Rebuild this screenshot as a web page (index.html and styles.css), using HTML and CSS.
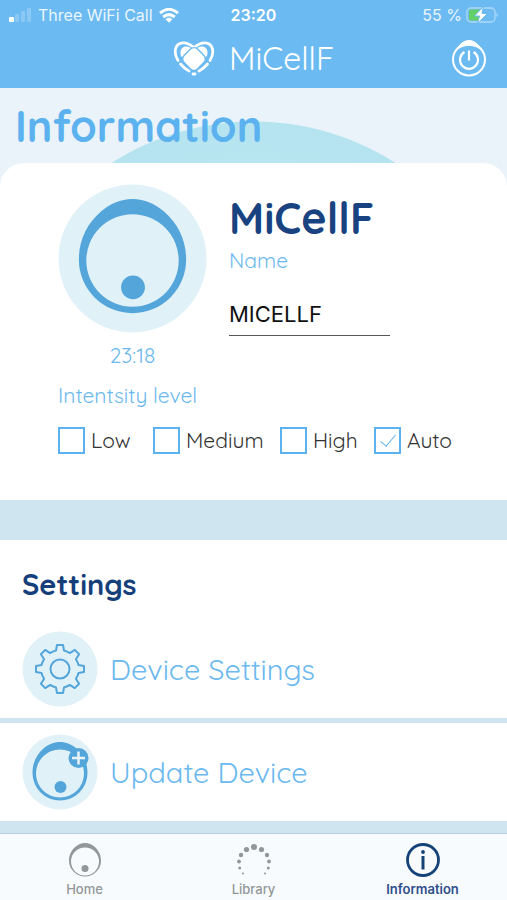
FILE: index.html
```
<!DOCTYPE html>
<html lang="en">
<head>
<meta charset="utf-8">
<meta name="viewport" content="width=device-width, initial-scale=1">
<title>MiCellF – Information</title>
<link rel="stylesheet" href="styles.css">
</head>
<body>
<header class="top">
  <div class="status">
    <div class="status-left">
      <svg width="24" height="14" viewBox="0 0 24 14" fill="#fff" aria-hidden="true">
        <rect x="1" y="9" width="5" height="5" rx="1"/>
        <g opacity=".22"><rect x="7" y="6" width="4" height="8" rx="1"/><rect x="13" y="3" width="4" height="11" rx="1"/><rect x="19" y="0" width="4" height="14" rx="1"/></g>
      </svg>
      <span>Three WiFi Call</span>
      <svg width="20" height="15" viewBox="0 0 20 15" fill="none" stroke="#fff" stroke-width="3" aria-hidden="true">
        <path d="M1 5.2Q10-2.6 19 5.2"/><path d="M4.2 9Q10 4.2 15.8 9"/><path d="M6.6 11.2Q10 8.4 13.4 11.2L10 14.8Z" fill="#fff" stroke="none"/>
      </svg>
    </div>
    <span class="clock">23:20</span>
    <div class="status-right">
      <span>55 %</span>
      <svg width="33" height="18" viewBox="0 0 33 18" aria-hidden="true">
        <rect x="1" y="2" width="28" height="14" rx="4" fill="none" stroke="#fff" stroke-opacity=".45" stroke-width="1.3"/>
        <path d="M30.5 6.5q2.5 2.5 0 5z" fill="#fff" opacity=".5"/>
        <path d="M5 3.500h8v11H5a2 2 0 0 1-2-2v-7a2 2 0 0 1 2-2z" fill="#65cf69"/>
        <path d="M17.500 0.500 8.500 10h5l-2 7.500 10-10h-5.500z" fill="#fff" stroke="#6bbaf1" stroke-width="1"/>
      </svg>
    </div>
  </div>
  <div class="nav">
    <div class="brand">
      <svg width="42" height="36" viewBox="0 0 42 36" aria-hidden="true">
        <g fill="none" stroke="#fff" stroke-width="2.800" stroke-linecap="round">
          <path d="M5 20.500C0 12.500 2 3.500 9.500 2.800C14 2.500 18 5 21 7.500C24 5 28 2.500 32.500 2.800C40 3.500 42 12.500 37 20.500"/>
          <path d="M7.500 24C10 27 13 29.500 16 31M34.500 24C32 27 29 29.500 26 31M20 34h2"/>
        </g>
        <path d="M8 16C6 9 10 6.500 13 6.500C16 6.500 19 8.500 21 10C23 8.500 26 6.500 29 6.500C32 6.500 36 9 34 16L21 27Z" fill="#fff"/>
        <rect x="11.500" y="9.500" width="19" height="19" rx="5" transform="rotate(45 21 19)" fill="#fff" stroke="#6bbaf1" stroke-width="1.400"/>
      </svg>
      <span>MiCellF</span>
    </div>
    <button class="power" type="button" aria-label="Power">
      <svg width="36" height="38" viewBox="0 0 36 38" fill="none" stroke="#fff" aria-hidden="true">
        <circle cx="18" cy="20.500" r="16" stroke-width="2"/>
        <path d="M4.500 12C8 5.500 13 1.500 18 1.500C23 1.500 28 5.500 31.500 12C25 4.500 11 4.500 4.500 12Z" fill="#fff" stroke-width="1"/>
        <path d="M13.500 13a9 9 0 1 0 9 0M18 11.500v10" stroke-width="2.200"/>
      </svg>
    </button>
  </div>
</header>
<main>
  <section class="hero">
    <h1>Information</h1>
    <div class="card">
      <div class="device">
        <div class="device-art">
          <svg class="device-icon" viewBox="0 0 150 150" aria-hidden="true">
            <circle cx="75" cy="75" r="74.500" fill="#e0f1f8"/>
            <path fill="#53a5da" fill-rule="evenodd" d="M75 15C87 15 98 20 107 28C121 40 129 57 129 76A54 54 0 0 1 21 76C21 57 29 40 43 28C52 20 63 15 75 15ZM75 30.500A46.500 46.500 0 1 0 75 123.500A46.500 46.500 0 1 0 75 30.500Z"/>
            <circle cx="75.500" cy="104" r="12" fill="#53a5da"/>
          </svg>
          <time>23:18</time>
        </div>
        <div class="device-info">
          <h2>MiCellF</h2>
          <label for="name">Name</label>
          <input id="name" type="text" value="MICELLF">
        </div>
      </div>
      <fieldset class="levels">
        <legend>Intentsity level</legend>
        <div class="options">
          <label><input type="checkbox">Low</label>
          <label><input type="checkbox">Medium</label>
          <label><input type="checkbox">High</label>
          <label><input type="checkbox" checked>Auto</label>
        </div>
      </fieldset>
    </div>
  </section>
  <section class="settings">
    <h2>Settings</h2>
    <a class="row" href="#device-settings">
      <svg width="76" height="76" viewBox="-38 -38 76 76" aria-hidden="true">
        <circle r="37.500" fill="#e0f1f8"/>
        <g fill="none" stroke="#53a5da" stroke-width="2" stroke-linejoin="round">
          <circle r="9.500"/>
          <path d="M-3-24H3L4-18.500Q6.500-18 9.800-15.900L14.800-19.100 19.100-14.800 15.900-9.800Q18-6.500 18.500-4L24-3V3L18.500 4Q18 6.500 15.900 9.800L19.100 14.800 14.800 19.100 9.800 15.900Q6.500 18 4 18.500L3 24H-3L-4 18.500Q-6.500 18-9.800 15.900L-14.800 19.100-19.100 14.800-15.900 9.800Q-18 6.500-18.500 4L-24 3V-3L-18.500-4Q-18-6.500-15.900-9.800L-19.100-14.800-14.800-19.100-9.800-15.900Q-6.500-18-4-18.500Z"/>
        </g>
      </svg>
      <span>Device Settings</span>
    </a>
    <a class="row" href="#update-device">
      <svg width="76" height="76" viewBox="0 0 76 76" aria-hidden="true">
        <circle cx="38" cy="38" r="37.500" fill="#e0f1f8"/>
        <path fill="#53a5da" fill-rule="evenodd" d="M38 8C44 8 50 10.500 54.500 14.500C61.500 20.500 65.500 29 65.500 39A27.500 27.500 0 0 1 10.500 39C10.500 29 14.500 20.500 21.500 14.500C26 10.500 32 8 38 8ZM38 15.500A24 24 0 1 0 38 63.500A24 24 0 1 0 38 15.500Z"/>
        <circle cx="38.500" cy="53" r="6" fill="#53a5da"/>
        <circle cx="56.500" cy="24" r="10" fill="#53a5da"/>
        <path d="M50 24h13M56.500 17.500v13" stroke="#e9f5fb" stroke-width="2.500"/>
      </svg>
      <span>Update Device</span>
    </a>
  </section>
</main>
<nav class="tabs">
  <a href="#home">
    <svg width="34" height="36" viewBox="0 0 34 36" aria-hidden="true">
      <path fill="#929797" fill-rule="evenodd" d="M17 1C20.500 1 24 2.500 26.500 4.800C30.500 8.300 33 13 33 18.500A16 16 0 0 1 1 18.500C1 13 3.500 8.300 7.500 4.800C10 2.500 13.500 1 17 1ZM17 5.500A14 14 0 1 0 17 33.500A14 14 0 1 0 17 5.500Z"/>
      <circle cx="17" cy="26.500" r="3.500" fill="#929797"/>
    </svg>
    <span>Home</span>
  </a>
  <a href="#library">
    <svg width="36" height="36" viewBox="0 0 36 36" fill="#929797" aria-hidden="true">
      <circle cx="18" cy="5" r="3"/><circle cx="10.500" cy="7.500" r="2.600"/><circle cx="25.500" cy="7.500" r="2.600"/><circle cx="5" cy="13" r="2.200"/><circle cx="31" cy="13" r="2.200"/><circle cx="3" cy="19.500" r="1.900"/><circle cx="33" cy="19.500" r="1.900"/><circle cx="3.700" cy="26" r="1.500"/><circle cx="32.300" cy="26" r="1.500"/><circle cx="7" cy="31.500" r="1"/><circle cx="29" cy="31.500" r="1"/>
    </svg>
    <span>Library</span>
  </a>
  <a class="active" href="#information" aria-current="page">
    <svg width="36" height="36" viewBox="0 0 36 36" fill="none" stroke="#154277" aria-hidden="true">
      <circle cx="18" cy="18" r="15.500" stroke-width="2.800"/>
      <path d="M18 14v13.500" stroke-width="3"/><circle cx="18" cy="10" r="1.900" fill="#154277" stroke="none"/>
    </svg>
    <span>Information</span>
  </a>
</nav>
</body>
</html>
```
FILE: styles.css
```
* { box-sizing: border-box; }

body {
  margin: 0;
  min-height: 100vh;
  display: flex;
  flex-direction: column;
  background: #cfe6f0;
  color: #333;
  font-family: Quicksand, Lato, sans-serif;
}

h1, h2, fieldset, legend { margin: 0; padding: 0; border: 0; }
a { color: inherit; text-decoration: none; }
svg { display: block; flex: none; }

.top {
  background: #6bbaf1;
  color: #fff;
}

.status {
  display: grid;
  grid-template-columns: 1fr auto 1fr;
  align-items: center;
  height: 30px;
  padding: 0 8px;
  font: 16px/30px Inter, sans-serif;
}
.status-left, .status-right {
  display: flex;
  align-items: center;
  gap: 6px;
  color: #eaf6fe;
}
.status-right { justify-content: flex-end; gap: 4px; }
.clock { font-weight: 600; }

.nav {
  display: grid;
  grid-template-columns: 1fr auto 1fr;
  align-items: center;
  height: 58px;
  padding: 0 20px 2px;
}
.brand {
  grid-column: 2;
  display: flex;
  align-items: center;
  gap: 14px;
  font-size: 32px;
  font-weight: 400;
}
.power {
  justify-self: end;
  padding: 0;
  border: 0;
  background: none;
}

.hero {
  background:
    radial-gradient(circle 264px at 50% 297px, #c4edf4 0, #b5e4f0 263px, transparent 264px),
    #e9f3f9;
}
h1 {
  padding: 12px 15px 11px;
  color: #5bb2ef;
  font-size: 43px;
  font-weight: 700;
  line-height: 52px;
}

.card {
  padding: 21px 54px 46px 58px;
  border-radius: 24px 24px 0 0;
  background: #fff;
}
.device {
  display: flex;
  gap: 22px;
}
.device-art {
  text-align: center;
  color: #6bb9ee;
}
.device-icon { width: 149px; height: 149px; }
time {
  display: block;
  margin-top: 8px;
  font-size: 21px;
  line-height: 28px;
}
.device-info {
  display: flex;
  flex-direction: column;
  flex: 0 1 161px;
}
.device-info h2 {
  margin-top: 8px;
  color: #184380;
  font-size: 43px;
  line-height: 52px;
}
.device-info label {
  margin-top: 2px;
  color: #6bb9ee;
  font-size: 21px;
  line-height: 28px;
}
.device-info input {
  width: 100%;
  height: 36px;
  margin-top: 26px;
  padding: 0 0 8px;
  border: 0;
  border-bottom: 1px solid #555;
  border-radius: 0;
  background: none;
  color: #111;
  font: 22px/28px Inter, sans-serif;
}

.levels { margin-top: 12px; min-width: 0; }
.levels legend {
  color: #6bb9ee;
  font-size: 21px;
  line-height: 28px;
}
.options {
  display: grid;
  grid-template-columns: 95fr 127fr 94fr 79fr;
  padding-top: 17px;
}
.options label {
  display: flex;
  align-items: center;
  gap: 6px;
  font-size: 21px;
  line-height: 28px;
}
.options input {
  appearance: none;
  display: grid;
  place-items: center;
  flex: none;
  width: 27px;
  height: 27px;
  margin: 0;
  border: 2px solid #5bb2ef;
  background: #fff;
}
.options input:checked::after {
  content: "";
  width: 7px;
  height: 14px;
  margin-bottom: 4px;
  border: solid #5bb2ef;
  border-width: 0 1px 1px 0;
  transform: rotate(40deg);
}

.settings { margin-top: 40px; }
.settings h2 {
  padding: 24px 22px 11px;
  background: #fff;
  color: #153f7a;
  font-size: 29px;
  line-height: 40px;
}
.row {
  display: flex;
  align-items: center;
  gap: 12px;
  padding: 11px 22px;
  background: #fff;
  color: #6bb9ee;
  font-size: 29px;
  font-weight: 400;
}
.settings h2 + .row { padding-top: 16px; }
.row + .row { margin-top: 5px; }

.tabs {
  position: sticky;
  bottom: 0;
  display: grid;
  grid-template-columns: repeat(3, 1fr);
  height: 67px;
  margin-top: auto;
  padding-top: 8px;
  border-top: 1px solid #b9cfdf;
  background: #f8fbfd;
  color: #929797;
  font: 500 13px/16px Inter, sans-serif;
}
.tabs a {
  display: flex;
  flex-direction: column;
  align-items: center;
  gap: 3px;
}
.tabs .active { color: #304e8b; font-weight: 600; }
```
